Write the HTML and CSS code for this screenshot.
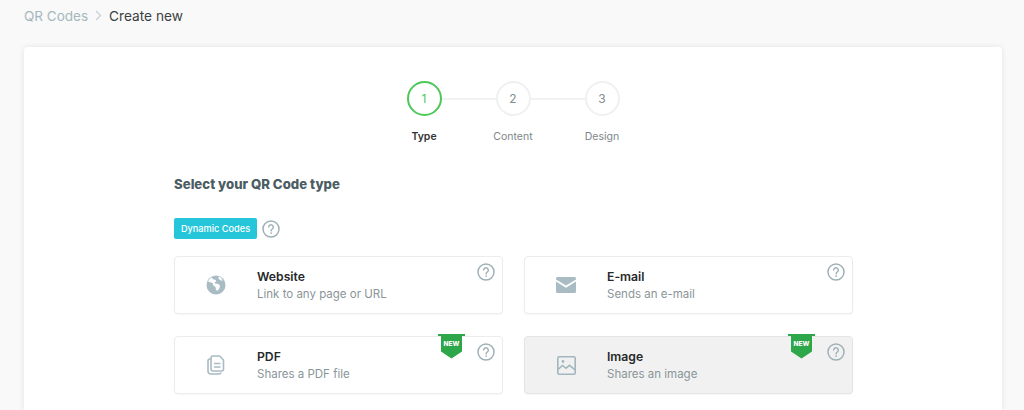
FILE: index.html
```html
<!DOCTYPE html>
<html lang="en">
<head>
<meta charset="utf-8">
<title>Create new QR Code</title>
<link rel="stylesheet" href="styles.css">
</head>
<body>
<svg class="defs" width="0" height="0" aria-hidden="true">
  <defs>
    <symbol id="help" viewBox="0 0 18 18">
      <circle cx="9" cy="9" r="8" fill="none" stroke="#9fb0b6" stroke-width="1.5"/>
      <path d="M6.7 7.1a2.3 2.3 0 1 1 3.6 1.9c-.8.5-1.2.9-1.2 1.9" fill="none" stroke="#9fb0b6" stroke-width="1.4" stroke-linecap="round"/>
      <circle cx="9.1" cy="13.1" r=".9" fill="#9fb0b6"/>
    </symbol>
    <symbol id="ribbon" viewBox="0 0 27 25">
      <path d="M0 0h27v2h-3V17.500L13.500 24.500 3 17.500V2H0z" fill="#2ea64a"/>
    </symbol>
  </defs>
</svg>
<nav class="crumbs">
  <span class="crumb-link">QR Codes</span>
  <svg class="crumb-sep" width="7" height="11" viewBox="0 0 7 11"><path d="M1 1l4.500 4.500L1 10" fill="none" stroke="#c5d0d3" stroke-width="1.2"/></svg>
  <span class="crumb-current">Create new</span>
</nav>
<main class="panel">
  <ol class="steps">
    <li class="step step-active"><span class="step-dot">1</span><span class="step-label">Type</span></li>
    <li class="step"><span class="step-dot">2</span><span class="step-label">Content</span></li>
    <li class="step"><span class="step-dot">3</span><span class="step-label">Design</span></li>
  </ol>
  <section class="picker">
    <h1 class="picker-title">Select your QR Code type</h1>
    <div class="group-head">
      <span class="badge">Dynamic Codes</span>
      <svg class="help-inline" width="18" height="18"><use href="#help"/></svg>
    </div>
    <div class="options">
      <article class="option">
        <div class="option-icon">
          <svg width="20" height="20" viewBox="0 0 20 20"><circle cx="10" cy="10" r="9.500" fill="#a9bcc4"/><path d="M10 .5C8 .8 6.500 1.500 5.500 2.500l2 2 2 .2.800 1.500-1.800 1.200.8 1.200 3 .4 1.700 1.600-.6 3-2.200 2.400-1.400-1.800-.4-2.500-2.200-1.200-.3-2.200L5 7.500 2 6.400C3.500 3.200 6.600 1 10 .5z" fill="#fff"/><path d="M12.500 1.500l2.800 1.500 1.400 2.800-2.400-.6-1.800-1.700z" fill="#fff"/></svg>
        </div>
        <div class="option-text"><h2 class="option-name">Website</h2><p class="option-desc">Link to any page or URL</p></div>
        <svg class="help" width="18" height="18"><use href="#help"/></svg>
      </article>
      <article class="option">
        <div class="option-icon">
          <svg width="20" height="16" viewBox="0 0 20 16"><path d="M1.500 0h17A1.500 1.500 0 0 1 20 1.500v.9l-10 6.200L0 2.400v-.9A1.500 1.500 0 0 1 1.500 0z" fill="#a9bcc4"/><path d="M0 4.600l10 6.200 10-6.200v9.900a1.500 1.500 0 0 1-1.500 1.500h-17A1.500 1.500 0 0 1 0 14.500z" fill="#a9bcc4"/></svg>
        </div>
        <div class="option-text"><h2 class="option-name">E-mail</h2><p class="option-desc">Sends an e-mail</p></div>
        <svg class="help" width="18" height="18"><use href="#help"/></svg>
      </article>
      <article class="option">
        <div class="option-icon">
          <svg width="18" height="20" viewBox="0 0 18 20" fill="none" stroke="#a9bcc4" stroke-width="1.600"><path d="M6 1h6.500L16.500 5v9a2 2 0 0 1-2 2H6a2 2 0 0 1-2-2V3a2 2 0 0 1 2-2z"/><path d="M4 4H3a2 2 0 0 0-2 2v10a3 3 0 0 0 3 3h8a2 2 0 0 0 2-1.500"/><path d="M7 8.500h6.500M7 12h6.500" stroke-width="1.400"/></svg>
        </div>
        <div class="option-text"><h2 class="option-name">PDF</h2><p class="option-desc">Shares a PDF file</p></div>
        <svg class="ribbon" width="27" height="25"><use href="#ribbon"/></svg>
        <span class="ribbon-text">NEW</span>
        <svg class="help" width="18" height="18"><use href="#help"/></svg>
      </article>
      <article class="option option-selected">
        <div class="option-icon">
          <svg width="19" height="19" viewBox="0 0 19 19" fill="none" stroke="#a3b6be" stroke-width="1.600"><rect x=".8" y=".8" width="17.400" height="17.400" rx="1.500"/><path d="M1 13.500l4.500-4 3.500 2.800 3.500-3 5.500 4.500"/><circle cx="6" cy="5.500" r="1.400" fill="#a3b6be" stroke="none"/></svg>
        </div>
        <div class="option-text"><h2 class="option-name">Image</h2><p class="option-desc">Shares an image</p></div>
        <svg class="ribbon" width="27" height="25"><use href="#ribbon"/></svg>
        <span class="ribbon-text">NEW</span>
        <svg class="help" width="18" height="18"><use href="#help"/></svg>
      </article>
    </div>
  </section>
</main>
</body>
</html>
```
FILE: styles.css
```css
* { box-sizing: border-box; }
body {
  margin: 0;
  height: 410px;
  overflow: hidden;
  background: #f9f9f9;
  font-family: "Inter", "Liberation Sans", sans-serif;
  color: #2b2b2b;
  padding: 0 22px 0 24px;
}
.defs { position: absolute; }
.crumbs {
  height: 47px;
  padding-bottom: 16px;
  display: flex;
  align-items: center;
  gap: 7px;
  font-size: 13.500px;
  line-height: 16px;
}
.crumb-link { color: #a5b8bd; }
.crumb-current { color: #3c3f41; font-size: 13.700px; }
.panel {
  background: #fff;
  border-radius: 4px 4px 0 0;
  box-shadow: 0 0 6px rgba(0, 0, 0, 0.09);
  height: 363px;
  padding-top: 34px;
}
.steps {
  list-style: none;
  margin: 0;
  padding: 0;
  display: flex;
  justify-content: center;
}
.step {
  width: 89px;
  display: flex;
  flex-direction: column;
  align-items: center;
  position: relative;
}
.step + .step::before {
  content: "";
  position: absolute;
  left: -28px;
  width: 56px;
  top: 17px;
  height: 2px;
  background: #f2f2f2;
}
.step-dot {
  width: 35px;
  height: 35px;
  border: 2px solid #f0f0f0;
  border-radius: 50%;
  background: #fff;
  display: flex;
  align-items: center;
  justify-content: center;
  font-size: 12px;
  color: #7f8c90;
  position: relative;
  z-index: 1;
}
.step-active .step-dot {
  border-color: #4cc85a;
  color: #4cc85a;
}
.step-label {
  margin-top: 14px;
  font-size: 10.500px;
  line-height: 14px;
  color: #7d8588;
}
.step-active .step-label {
  color: #333;
  font-weight: 600;
}
.picker {
  width: 679px;
  margin: 32px 0 0 150px;
}
.picker-title {
  margin: 0;
  font-size: 13.200px;
  line-height: 16px;
  font-weight: 800;
  color: #4b5c62;
}
.group-head {
  display: flex;
  align-items: center;
  gap: 5px;
  margin-top: 26px;
}
.badge {
  width: 83px;
  height: 21px;
  background: #26c6da;
  color: #fff;
  border-radius: 2px;
  font-size: 9.200px;
  font-weight: 500;
  display: flex;
  align-items: center;
  justify-content: center;
}
.help-inline { display: block; }
.options {
  display: grid;
  grid-template-columns: 329px 329px;
  grid-auto-rows: 58px;
  column-gap: 21px;
  row-gap: 22px;
  margin-top: 17px;
}
.option {
  position: relative;
  display: flex;
  align-items: center;
  background: #fff;
  border: 1px solid #ececec;
  border-radius: 4px;
  box-shadow: 0 1px 2px rgba(0, 0, 0, 0.04);
}
.option-selected {
  background: #f1f1f1;
  border-color: #e4e4e4;
}
.option-icon {
  width: 82px;
  flex: none;
  display: flex;
  justify-content: center;
}
.option-icon svg { display: block; }
.option-name {
  margin: 0;
  font-size: 12.200px;
  line-height: 16px;
  font-weight: 600;
  color: #26282a;
}
.option-desc {
  margin: 1px 0 0;
  font-size: 11.500px;
  line-height: 16px;
  color: #8a9599;
}
.help {
  position: absolute;
  top: 6px;
  right: 7px;
}
.ribbon {
  position: absolute;
  top: -3px;
  left: 263px;
}
.ribbon-text {
  position: absolute;
  top: 1px;
  left: 263px;
  width: 27px;
  text-align: center;
  font-size: 6.500px;
  line-height: 12px;
  font-weight: 800;
  color: #fff;
}
```
